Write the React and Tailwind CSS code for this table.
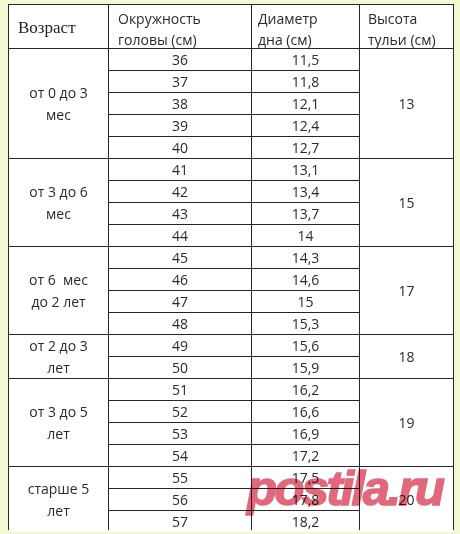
const groups = [
  { age: ["от 0 до 3", "мес"], height: 13, rows: [["36", "11,5"], ["37", "11,8"], ["38", "12,1"], ["39", "12,4"], ["40", "12,7"]] },
  { age: ["от 3 до 6", "мес"], height: 15, rows: [["41", "13,1"], ["42", "13,4"], ["43", "13,7"], ["44", "14"]] },
  { age: ["от 6  мес", "до 2 лет"], height: 17, rows: [["45", "14,3"], ["46", "14,6"], ["47", "15"], ["48", "15,3"]] },
  { age: ["от 2 до 3", "лет"], height: 18, rows: [["49", "15,6"], ["50", "15,9"]] },
  { age: ["от 3 до 5", "лет"], height: 19, rows: [["51", "16,2"], ["52", "16,6"], ["53", "16,9"], ["54", "17,2"]] },
  { age: ["старше 5", "лет"], height: 20, rows: [["55", "17,5"], ["56", "17,8"], ["57", "18,2"]] },
];

const spans = {
  2: "row-span-2",
  3: "row-span-3",
  4: "row-span-4",
  5: "row-span-5",
};

const App = () => {
  return (
    <div
      className="relative w-[460px] h-[534px] bg-[#f4f8d0] pt-[4px] pl-[8px] text-[#2a2a2a]"
      style={{ fontFamily: '"Open Sans", "Noto Sans", sans-serif' }}
    >
      <div className="grid w-[446px] h-[526px] grid-cols-[99px_142px_107px_93px] grid-rows-[43px_repeat(22,1fr)] gap-px p-px bg-[#262626] text-[14px]">
        <div
          className="bg-white flex items-center pl-[9px] pt-[2px] text-[17px] text-[#222]"
          style={{ fontFamily: '"Liberation Serif", serif' }}
        >
          Возраст
        </div>
        <div className="bg-white pl-[9px] pt-[3px] leading-[21px]">
          Окружность<br />головы (см)
        </div>
        <div className="bg-white pl-[6px] pt-[3px] leading-[21px]">
          Диаметр<br />дна (см)
        </div>
        <div className="bg-white pl-[8px] pt-[3px] leading-[21px]">
          Высота<br />тульи (см)
        </div>

        {groups.map((g) =>
          g.rows.map((r, i) => [
            i === 0 && (
              <div
                key={g.age[0]}
                className={`${spans[g.rows.length]} bg-white flex flex-col items-center justify-center leading-[22px] whitespace-pre`}
              >
                <span>{g.age[0]}</span>
                <span>{g.age[1]}</span>
              </div>
            ),
            <div key={r[0] + "a"} className="bg-white flex items-center justify-center">
              {r[0]}
            </div>,
            <div key={r[0] + "b"} className="bg-white flex items-center justify-center">
              {r[1]}
            </div>,
            i === 0 && (
              <div
                key={g.height}
                className={`${spans[g.rows.length]} bg-white flex items-center justify-center`}
              >
                {g.height}
              </div>
            ),
          ])
        )}
      </div>

      {/* watermark */}
      <div
        className="absolute left-[247px] top-[452px] text-[49px] font-bold italic text-[#e2687c] tracking-[-2.5px] mix-blend-multiply [-webkit-text-stroke:1.5px_#e2687c] pointer-events-none"
        style={{ fontFamily: '"Liberation Sans", sans-serif' }}
      >
        postila.ru
      </div>
    </div>
  );
};

export default App;
